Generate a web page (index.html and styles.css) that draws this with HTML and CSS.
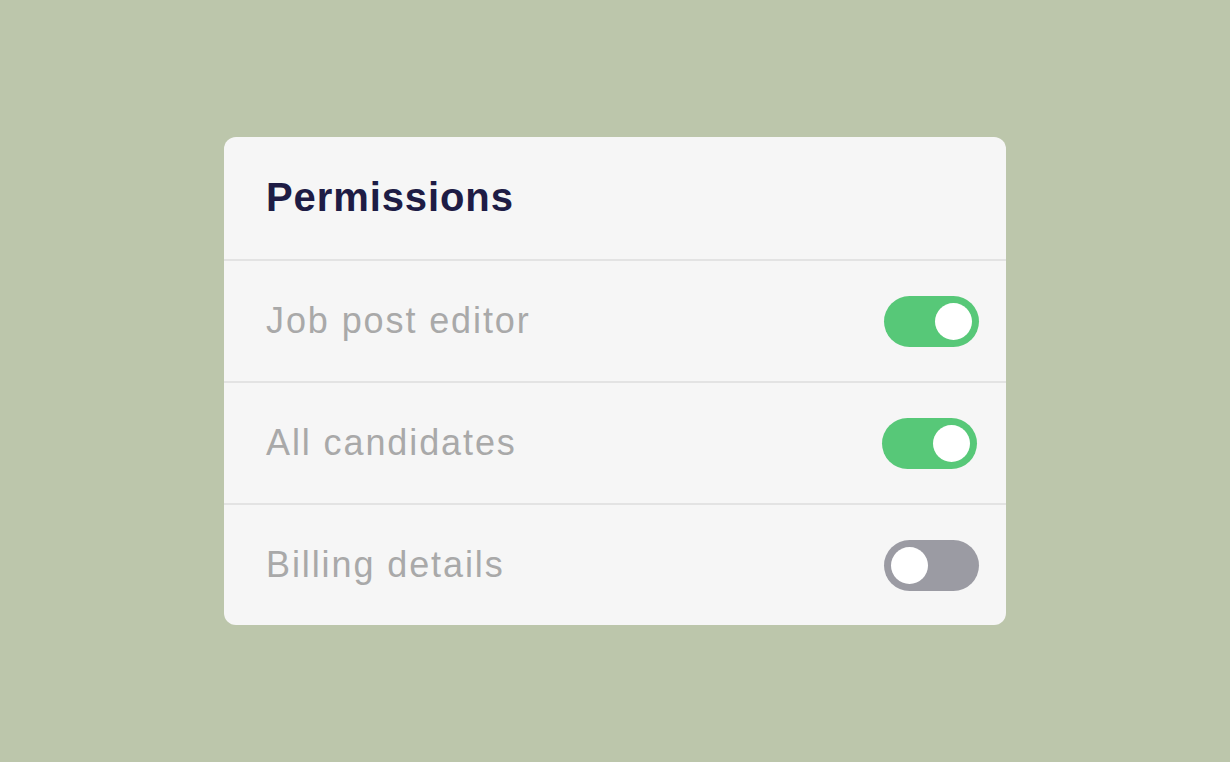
FILE: index.html
```html
<!DOCTYPE html>
<html>
<head>
<meta charset="utf-8">
<link rel="stylesheet" href="styles.css">
</head>
<body>
<div class="page">
  <div class="card">
    <div class="header"><h1 class="title">Permissions</h1></div>
    <div class="row">
      <span class="label">Job post editor</span>
      <span class="toggle on"><span class="knob"></span></span>
    </div>
    <div class="row">
      <span class="label">All candidates</span>
      <span class="toggle on shift"><span class="knob"></span></span>
    </div>
    <div class="row last">
      <span class="label">Billing details</span>
      <span class="toggle off"><span class="knob"></span></span>
    </div>
  </div>
</div>
</body>
</html>
```
FILE: styles.css
```css
html, body {
  margin: 0;
  padding: 0;
}
body {
  background: #bcc6ab;
  font-family: "Liberation Sans", Arial, sans-serif;
}
.page {
  width: 1230px;
  height: 762px;
  display: flex;
  align-items: center;
  justify-content: center;
}
.card {
  width: 782px;
  height: 488px;
  background: #f6f6f6;
  border-radius: 12px;
  display: flex;
  flex-direction: column;
  overflow: hidden;
}
.header {
  height: 124px;
  display: flex;
  align-items: center;
  padding: 0 0 2px 42px;
  border-bottom: 2px solid #e3e3e3;
  box-sizing: border-box;
}
.title {
  margin: 0;
  font-size: 40px;
  font-weight: 700;
  color: #1e1c45;
  letter-spacing: 0.9px;
}
.row {
  height: 122px;
  box-sizing: border-box;
  display: flex;
  align-items: center;
  justify-content: space-between;
  padding: 0 27px 0 42px;
  border-bottom: 2px solid #e3e3e3;
}
.row.last {
  border-bottom: none;
  height: 120px;
}
.label {
  font-size: 36px;
  color: #a9a9a9;
  letter-spacing: 1.9px;
}
.toggle {
  width: 95px;
  height: 51px;
  border-radius: 26px;
  display: flex;
  align-items: center;
  padding: 0 7px;
  box-sizing: border-box;
}
.toggle.on {
  background: #57c878;
  justify-content: flex-end;
}
.toggle.shift {
  margin-right: 2px;
}
.toggle.off {
  background: #9b9ba3;
  justify-content: flex-start;
}
.knob {
  width: 37px;
  height: 37px;
  border-radius: 50%;
  background: #ffffff;
}
```
